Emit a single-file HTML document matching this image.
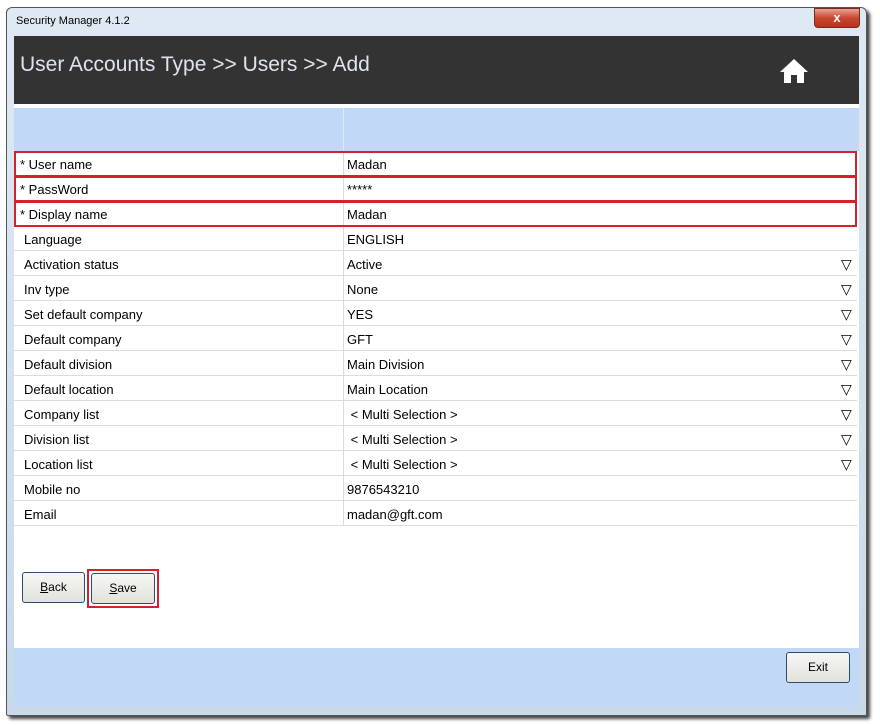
<!DOCTYPE html>
<html><head><meta charset="utf-8"><style>
*{margin:0;padding:0;box-sizing:border-box}
body{width:880px;height:725px;background:#fff;position:relative;overflow:hidden;font-family:"Liberation Sans",sans-serif}
.win{position:absolute;left:6px;top:7px;width:861px;height:709px;background:linear-gradient(#dfe9f3,#c9d9ea);border:1px solid #555;border-radius:6px 6px 2px 2px;box-shadow:3px 3px 3px #444}
.title{position:absolute;left:9px;top:7px;font-size:11px;color:#000}
.close{position:absolute;left:807px;top:0px;width:46px;height:20px;background:linear-gradient(#e8a393,#c9472f 50%,#b8311d);border:1px solid #7a2a20;border-radius:0 0 4px 4px;color:#fff;font-size:13px;font-weight:bold;text-align:center;line-height:17px}
.client{position:absolute;left:14px;top:36px;width:845px;height:670px;background:#fff}
.hdr{position:absolute;left:0;top:0;width:845px;height:68px;background:#333}
.hdr span{position:absolute;left:6px;top:17px;font-size:21px;color:#dce4ee}
.blue{position:absolute;left:0;width:845px;background:#c1d8f7}
.row{position:absolute;left:0;width:843px;height:25px;border-bottom:1px solid #dcdcdc;font-size:13px;color:#000}
.row .l{position:absolute;left:10px;top:6px}
.row .v{position:absolute;left:333px;top:6px}
.row .a{position:absolute;left:827px;top:5px;font-size:14px}
.row .d{position:absolute;left:329px;top:0;height:25px;border-left:1px solid #dcdcdc}
.red{position:absolute;left:0;width:843px;height:26px;border:2px solid #d3222c}
.btn{position:absolute;height:31px;border:1px solid #2b4c6b;border-radius:3px;background:linear-gradient(#f6f6f4,#e2e2dc);font-size:12px;text-align:center;line-height:29px}
</style></head><body>
<div class="win">
<div class="title">Security Manager 4.1.2</div>
<div class="close">x</div>
</div>
<div class="client">
<div class="hdr"><span>User Accounts Type &gt;&gt; Users &gt;&gt; Add</span>
<svg style="position:absolute;left:765px;top:22px" width="30" height="26" viewBox="0 0 30 26"><path d="M15 1 L29 14 L25 14 L25 25 L18 25 L18 17 L12 17 L12 25 L5 25 L5 14 L1 14 Z" fill="#fff"/></svg>
</div>
<div class="blue" style="top:72px;height:43px"><div style="position:absolute;left:329px;top:0;height:43px;border-left:1px solid #e0e8f0"></div></div>
<div id="rows"></div>
<div class="blue" style="top:612px;height:58px"></div>
<div class="btn" style="left:8px;top:536px;width:63px"><u>B</u>ack</div>
<div style="position:absolute;left:73px;top:533px;width:72px;height:39px;border:2px solid #d3222c"></div>
<div class="btn" style="left:77px;top:537px;width:64px"><u>S</u>ave</div>
<div class="btn" style="left:772px;top:616px;width:64px">Exit</div>
</div>
<script>
var d=[["* User name","Madan",0],["* PassWord","*****",0],["* Display name","Madan",0],["Language","ENGLISH",0],["Activation status","Active",1],["Inv type","None",1],["Set default company","YES",1],["Default company","GFT",1],["Default division","Main Division",1],["Default location","Main Location",1],["Company list","&nbsp;&lt; Multi Selection &gt;",1],["Division list","&nbsp;&lt; Multi Selection &gt;",1],["Location list","&nbsp;&lt; Multi Selection &gt;",1],["Mobile no","9876543210",0],["Email","madan@gft.com",0]];
var h="";d.forEach(function(r,i){var t=115+i*25;var lx=i<3?6:10;
h+='<div class="row" style="top:'+t+'px"><div class="d"></div><span class="l" style="left:'+lx+'px">'+r[0]+'</span><span class="v">'+r[1]+'</span>'+(r[2]?'<span class="a">&#9661;</span>':'')+'</div>';});
h+='<div class="red" style="top:115px"></div><div class="red" style="top:140px"></div><div class="red" style="top:165px"></div>';
document.getElementById("rows").innerHTML=h;
</script>
</body></html>
